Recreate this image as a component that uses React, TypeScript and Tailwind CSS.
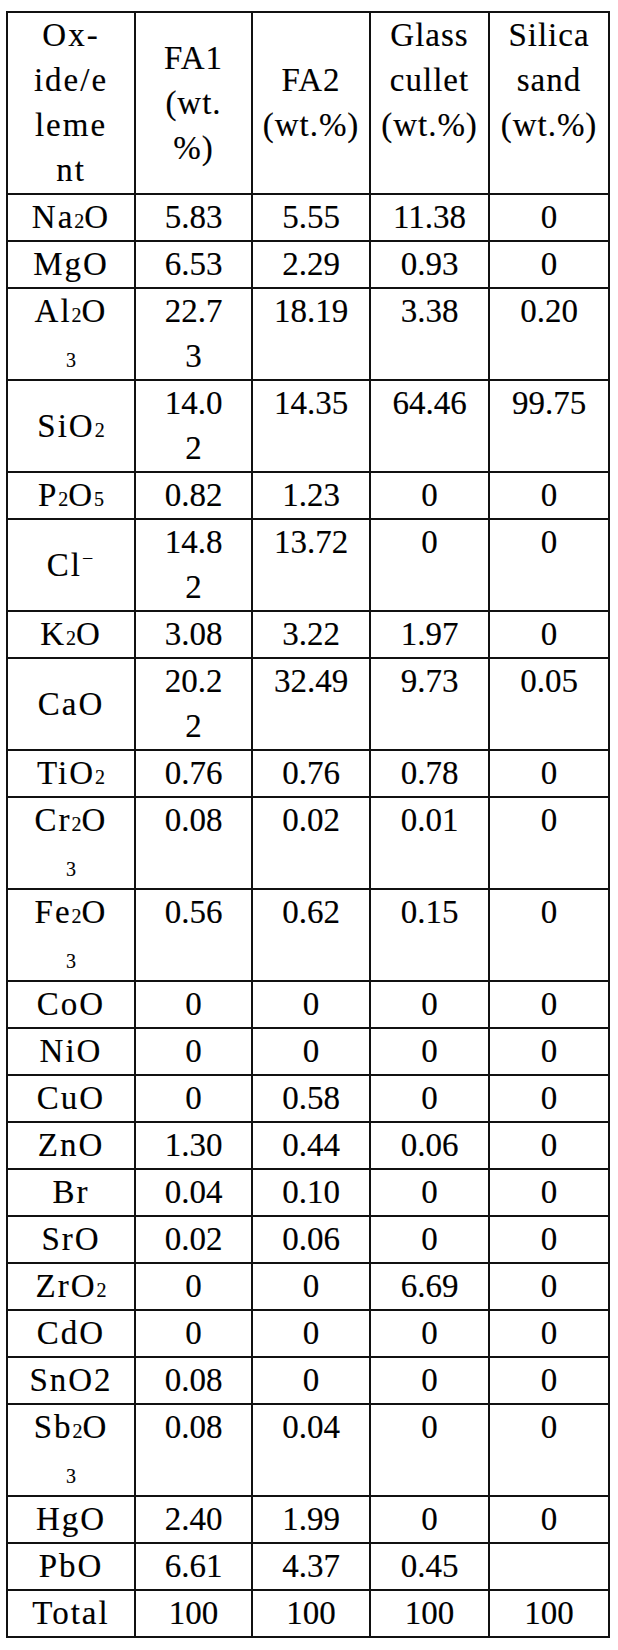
import React from "react";

const S = ({ c }: { c: string }) => (
  <span className="text-[20px] leading-none tracking-normal">{c}</span>
);

type Row = { el: React.ReactNode; vals: React.ReactNode[] };

const two = (a: string, b: string) => (
  <>
    {a}
    <br />
    {b}
  </>
);

const rows: Row[] = [
  { el: <>Na<S c="2" />O</>, vals: ["5.83", "5.55", "11.38", "0"] },
  { el: <>MgO</>, vals: ["6.53", "2.29", "0.93", "0"] },
  {
    el: (
      <>
        Al<S c="2" />O
        <br />
        <S c="3" />
      </>
    ),
    vals: [two("22.7", "3"), "18.19", "3.38", "0.20"],
  },
  { el: <>SiO<S c="2" /></>, vals: [two("14.0", "2"), "14.35", "64.46", "99.75"] },
  { el: <>P<S c="2" />O<S c="5" /></>, vals: ["0.82", "1.23", "0", "0"] },
  {
    el: (
      <>
        Cl<span className="relative -top-[11px] text-[20px] leading-none">−</span>
      </>
    ),
    vals: [two("14.8", "2"), "13.72", "0", "0"],
  },
  { el: <>K<S c="2" />O</>, vals: ["3.08", "3.22", "1.97", "0"] },
  { el: <>CaO</>, vals: [two("20.2", "2"), "32.49", "9.73", "0.05"] },
  { el: <>TiO<S c="2" /></>, vals: ["0.76", "0.76", "0.78", "0"] },
  {
    el: (
      <>
        Cr<S c="2" />O
        <br />
        <S c="3" />
      </>
    ),
    vals: ["0.08", "0.02", "0.01", "0"],
  },
  {
    el: (
      <>
        Fe<S c="2" />O
        <br />
        <S c="3" />
      </>
    ),
    vals: ["0.56", "0.62", "0.15", "0"],
  },
  { el: <>CoO</>, vals: ["0", "0", "0", "0"] },
  { el: <>NiO</>, vals: ["0", "0", "0", "0"] },
  { el: <>CuO</>, vals: ["0", "0.58", "0", "0"] },
  { el: <>ZnO</>, vals: ["1.30", "0.44", "0.06", "0"] },
  { el: <>Br</>, vals: ["0.04", "0.10", "0", "0"] },
  { el: <>SrO</>, vals: ["0.02", "0.06", "0", "0"] },
  { el: <>ZrO<S c="2" /></>, vals: ["0", "0", "6.69", "0"] },
  { el: <>CdO</>, vals: ["0", "0", "0", "0"] },
  { el: <>SnO2</>, vals: ["0.08", "0", "0", "0"] },
  {
    el: (
      <>
        Sb<S c="2" />O
        <br />
        <S c="3" />
      </>
    ),
    vals: ["0.08", "0.04", "0", "0"],
  },
  { el: <>HgO</>, vals: ["2.40", "1.99", "0", "0"] },
  { el: <>PbO</>, vals: ["6.61", "4.37", "0.45", ""] },
  { el: <>Total</>, vals: ["100", "100", "100", "100"] },
];

export default function App() {
  const cell =
    "border-2 border-[#111] p-0 text-center text-[33px] leading-[45px] text-black font-['Liberation_Serif','Times_New_Roman',serif] [-webkit-text-stroke:0.15px_black]";
  return (
    <div className="min-h-[1650px] w-[618px] bg-white pt-[11px] pl-[6px] font-['Liberation_Serif','Times_New_Roman',serif]">
      <table className="w-[602px] table-fixed border-collapse">
        <colgroup>
          <col className="w-[128px]" />
          <col className="w-[117px]" />
          <col className="w-[118px]" />
          <col className="w-[119px]" />
          <col className="w-[120px]" />
        </colgroup>
        <thead>
          <tr>
            <th className={`${cell} align-top font-normal tracking-[2px]`}>
              Ox-
              <br />
              ide/e
              <br />
              leme
              <br />
              nt
            </th>
            <th className={`${cell} align-middle font-normal tracking-[1px]`}>
              FA1
              <br />
              (wt.
              <br />
              %)
            </th>
            <th className={`${cell} align-middle font-normal tracking-[1px]`}>
              FA2
              <br />
              (wt.%)
            </th>
            <th className={`${cell} align-top font-normal tracking-[1px]`}>
              Glass
              <br />
              cullet
              <br />
              (wt.%)
            </th>
            <th className={`${cell} align-top font-normal tracking-[1px]`}>
              Silica
              <br />
              sand
              <br />
              (wt.%)
            </th>
          </tr>
        </thead>
        <tbody>
          {rows.map((r, i) => (
            <tr key={i}>
              <td className={`${cell} align-middle tracking-[2px]`}>{r.el}</td>
              {r.vals.map((v, j) => (
                <td key={j} className={`${cell} align-top`}>
                  {v}
                </td>
              ))}
            </tr>
          ))}
        </tbody>
      </table>
    </div>
  );
}
